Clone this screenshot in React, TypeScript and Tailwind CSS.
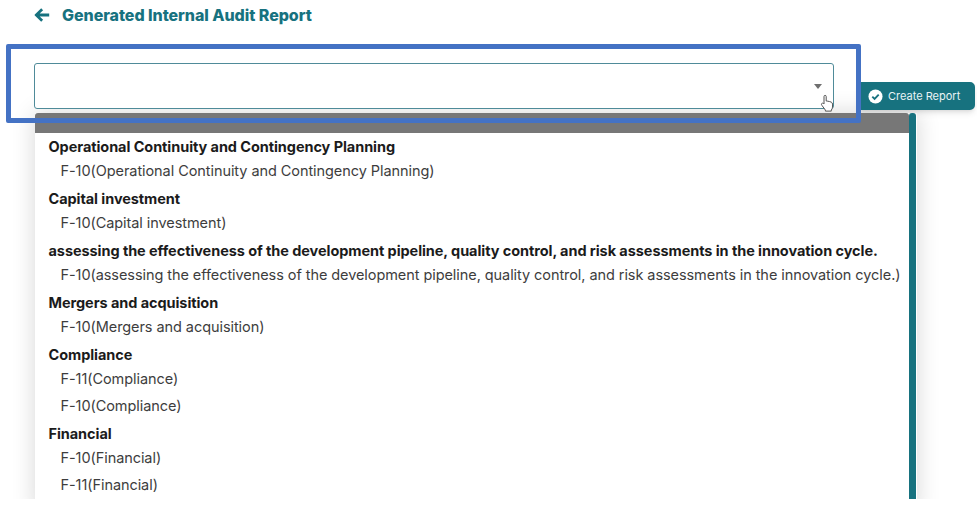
const groups = [
  { label: "Operational Continuity and Contingency Planning", items: ["F-10(Operational Continuity and Contingency Planning)"] },
  { label: "Capital investment", items: ["F-10(Capital investment)"] },
  {
    label: "assessing the effectiveness of the development pipeline, quality control, and risk assessments in the innovation cycle.",
    items: ["F-10(assessing the effectiveness of the development pipeline, quality control, and risk assessments in the innovation cycle.)"],
  },
  { label: "Mergers and acquisition", items: ["F-10(Mergers and acquisition)"] },
  { label: "Compliance", items: ["F-11(Compliance)", "F-10(Compliance)"] },
  { label: "Financial", items: ["F-10(Financial)", "F-11(Financial)"] },
];

export default function App() {
  return (
    <div className="relative h-[506px] w-[977px] overflow-hidden bg-white font-['Inter',sans-serif]">
      <div className="h-[499px] overflow-hidden pl-[34px]">
        <div className="flex h-[29px] items-center text-[#17727f]">
          <svg width="16" height="16" viewBox="0 0 16 16" fill="currentColor">
            <path d="M7.2 1.300 0.8 7.500a.7.7 0 0 0 0 1l6.400 6.200 1.900-1.900-3.400-3.200H15.200V6.400H5.700l3.400-3.200z" />
          </svg>
          <h1 className="ml-[12px] text-[16px] font-extrabold tracking-[-0.05px]">Generated Internal Audit Report</h1>
        </div>

        <div className="mt-[34px] flex items-start">
          <div className="flex h-[46px] w-[800px] items-center justify-end rounded-[3px] border-[1.5px] border-[#4f8b99] bg-white pr-[11px]">
            <div className="mt-[1px] h-0 w-0 border-x-[4.5px] border-t-[5px] border-x-transparent border-t-[#6f6f6f]" />
          </div>
          <button className="ml-[24px] mt-[19px] flex h-[28px] w-[117px] items-center rounded-r-[5px] rounded-l-[3px] bg-[#17727f] pl-[10px] text-[11px] text-[#e8f3f5] shadow-md">
            <svg width="15" height="15" viewBox="0 0 16 16" className="mr-[5px]">
              <circle cx="8" cy="8" r="7.5" fill="#ffffff" />
              <path d="M4.6 8.2l2.4 2.4 4.4-4.6" fill="none" stroke="#17727f" strokeWidth="2" />
            </svg>
            Create Report
          </button>
        </div>

        <div className="ml-[1px] mt-[3px] flex h-[400px] w-[882px] shadow-[0_0_22px_rgba(0,0,0,0.16)]">
          <div className="w-[874px] bg-white">
            <div className="h-[20px] rounded-t-[3px] bg-[#777777]" />
            <div className="pl-[13.5px] pt-[2px] text-[14.5px] leading-[24px]">
              {groups.map((group) => (
                <div key={group.label} className="pb-[4px]">
                  <div className="h-[24px] font-bold whitespace-nowrap tracking-[-0.07px] text-[#1b1b1b]">{group.label}</div>
                  {group.items.map((item) => (
                    <div key={item} className="mb-[3px] h-[24px] whitespace-nowrap pl-[12px] tracking-[-0.07px] text-[#3d3d3d] last:mb-0">
                      {item}
                    </div>
                  ))}
                </div>
              ))}
            </div>
          </div>
          <div className="w-[7px] rounded-t-[3px] bg-[#17727f]" />
        </div>
      </div>

      <div className="absolute left-[6px] top-[44px] h-[79px] w-[855px] rounded-[2px] border-[5px] border-[#4472c4]" />

      <svg width="14" height="18" viewBox="0 0 14 18" className="absolute left-[820px] top-[94px]">
        <path
          d="M4 9V2.500a1.100 1.100 0 0 1 2.200 0V7l1.600.2 1.600.3 1.800.6c.8.4 1.300 1 1.300 2v3c0 1-.5 2-1.200 3v1H5.400v-1L2 11.500c-.8-1-.7-1.800 0-2.200.6-.3 1.300-.1 2 .7z"
          fill="#ffffff"
          stroke="#555555"
          strokeWidth="1"
        />
      </svg>
    </div>
  );
}
